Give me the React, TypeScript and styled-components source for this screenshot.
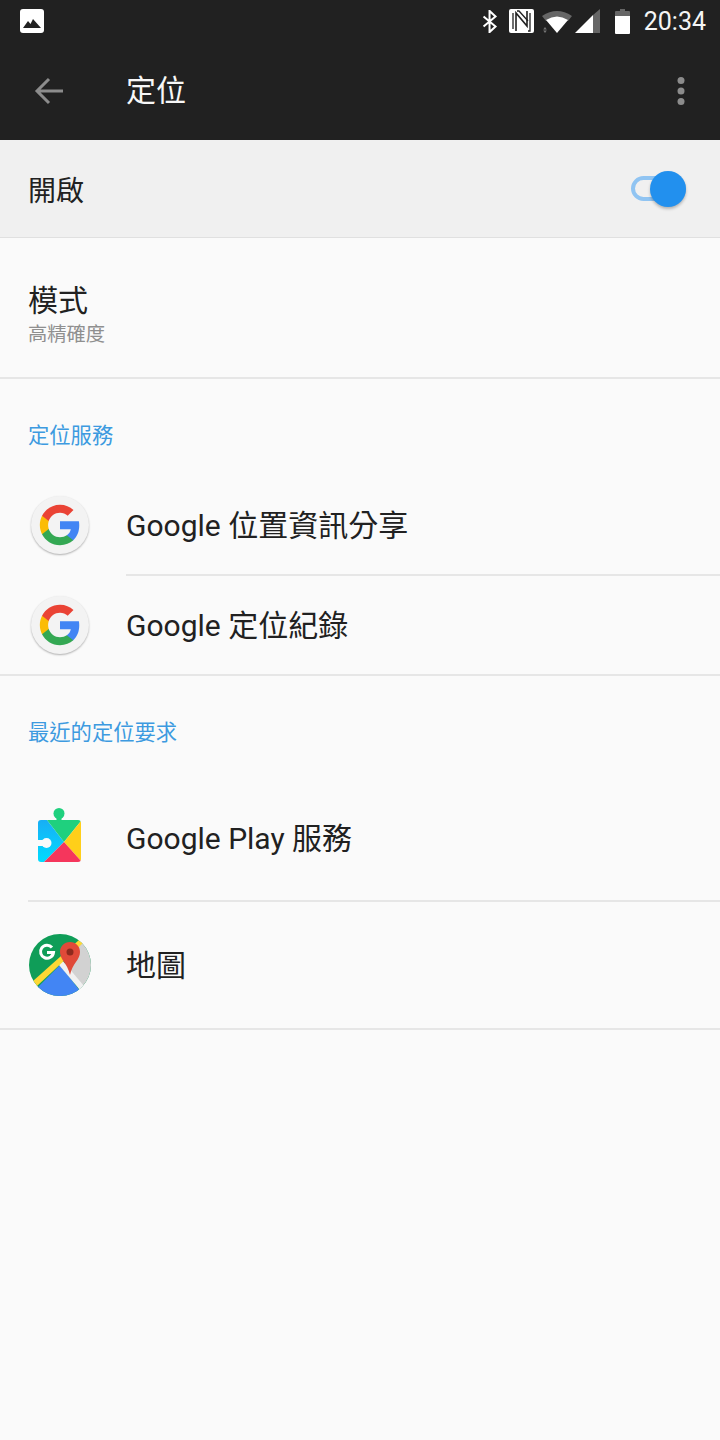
import React from 'react';
import styled, { createGlobalStyle } from 'styled-components';

const GlobalStyle = createGlobalStyle`
  html, body {
    margin: 0;
    padding: 0;
    background: #fafafa;
  }
  body {
    font-family: Roboto, "Noto Sans CJK TC", sans-serif;
  }
`;

const Page = styled.div`
  width: 720px;
  height: 1440px;
  overflow: hidden;
  background: #fafafa;
  display: flex;
  flex-direction: column;
`;

const Header = styled.header`
  height: 140px;
  background: #212121;
  display: flex;
  flex-direction: column;
`;

const StatusBar = styled.div`
  height: 42px;
  padding: 0 14px 0 20px;
  display: flex;
  align-items: center;
  justify-content: space-between;
  color: #fff;
`;

const StatusRight = styled.div`
  display: flex;
  align-items: center;
`;

const StatusIcon = styled.svg<{ $gap?: number }>`
  display: block;
  margin-left: ${p => p.$gap ?? 0}px;
`;

const Clock = styled.span`
  font-size: 25px;
  margin-left: 14px;
  color: #f5f5f5;
`;

const Toolbar = styled.div`
  height: 98px;
  display: flex;
  align-items: center;
  padding: 0 34px 0 34px;
`;

const ToolbarTitle = styled.h1`
  margin: 0 0 0 62px;
  flex: 1;
  font-size: 30px;
  line-height: 40px;
  font-weight: 400;
  color: #f7f7f7;
`;

const SwitchRow = styled.div`
  height: 98px;
  box-sizing: border-box;
  background: #f0f0f0;
  border-bottom: 1px solid #e0e0e0;
  display: flex;
  align-items: center;
  justify-content: space-between;
  padding: 0 34px 0 28px;
`;

const SwitchLabel = styled.span`
  font-size: 28px;
  color: #212121;
`;

const Track = styled.div`
  position: relative;
  width: 55px;
  height: 25px;
  box-sizing: border-box;
  border: 4px solid #90c4f2;
  border-radius: 13px;
`;

const Thumb = styled.div`
  position: absolute;
  right: -4px;
  top: -9px;
  width: 36px;
  height: 36px;
  border-radius: 50%;
  background: #2290ee;
  box-shadow: 0 2px 3px rgba(0, 0, 0, 0.25);
`;

const ModeRow = styled.div`
  height: 141px;
  box-sizing: border-box;
  border-bottom: 2px solid #e6e6e6;
  padding: 43px 28px 0;
`;

const ModeTitle = styled.div`
  font-size: 30px;
  line-height: 40px;
  color: #212121;
`;

const ModeValue = styled.div`
  font-size: 19.300px;
  line-height: 28px;
  color: #8f8f8f;
`;

const SectionTitle = styled.div<{ $height: number }>`
  height: ${p => p.$height}px;
  box-sizing: border-box;
  padding: 42px 28px 0;
  font-size: 21.300px;
  line-height: 30px;
  color: #3d9ae0;
`;

const Row = styled.div<{ $height: number }>`
  height: ${p => p.$height}px;
  display: flex;
  align-items: center;
  padding-left: 28px;
`;

const IconSlot = styled.div`
  width: 64px;
  height: 64px;
  margin-right: 34px;
  display: flex;
  align-items: center;
  justify-content: center;
`;

const RowLabel = styled.span`
  font-size: 30px;
  color: #212121;
  margin-bottom: 4px;
`;

const Divider = styled.div<{ $inset: number }>`
  height: 2px;
  margin-left: ${p => p.$inset}px;
  background: #e6e6e6;
`;

const GoogleBadge = styled.div`
  width: 58px;
  height: 58px;
  margin-right: 1px;
  border-radius: 50%;
  background: #f3f3f3;
  box-shadow: 0 1px 2px rgba(0, 0, 0, 0.3);
  display: flex;
  align-items: center;
  justify-content: center;
`;

const PlaySvg = styled.svg`
  margin-bottom: 6px;
`;

const GoogleG = () => (
  <svg width="44" height="44" viewBox="0 0 48 48">
    <path fill="#4285f4" d="M45 24.500c0-1.600-.1-3.100-.4-4.500H24v8.500h11.800c-.5 2.700-2 5-4.400 6.600v5.500h7.100C42.700 36.700 45 31.100 45 24.500z" />
    <path fill="#34a853" d="M24 46c5.900 0 10.900-2 14.500-5.300l-7.100-5.500c-2 1.300-4.500 2.100-7.400 2.100-5.700 0-10.500-3.800-12.300-9H4.400v5.700C8 41.100 15.400 46 24 46z" />
    <path fill="#fbbc05" d="M11.700 28.300c-.4-1.300-.7-2.800-.7-4.300s.3-3 .7-4.300V14H4.400C2.900 17 2 20.400 2 24s.9 7 2.400 10l7.300-5.700z" />
    <path fill="#ea4335" d="M24 10.700c3.200 0 6.100 1.100 8.400 3.300l6.300-6.300C34.900 4.200 29.900 2 24 2 15.400 2 8 6.900 4.400 14l7.300 5.700c1.800-5.200 6.600-9 12.300-9z" />
  </svg>
);

const PlayServices = () => (
  <PlaySvg width="44" height="56" viewBox="0 0 44 56">
    <defs>
      <clipPath id="playBody">
        <rect x="0" y="13" width="43" height="42" rx="3" />
      </clipPath>
      <linearGradient id="playCyan" x1="0" y1="0" x2="0" y2="1">
        <stop offset="0" stopColor="#18aef5" />
        <stop offset="1" stopColor="#00dcff" />
      </linearGradient>
    </defs>
    <circle cx="21" cy="6.500" r="5.500" fill="#1fd07e" />
    <rect x="18.500" y="10" width="5" height="5" fill="#1fd07e" />
    <g clipPath="url(#playBody)">
      <path fill="url(#playCyan)" d="M0 13h9l17 22L6 55H0z" />
      <path fill="#1fd07e" d="M9 13h34v1L26 35z" />
      <path fill="#ffcf1a" d="M43 14v40L26 35z" />
      <path fill="#f5365c" d="M26 35l17 19v1H6z" />
    </g>
    <circle cx="8.500" cy="36" r="5" fill="#fafafa" />
    <rect x="0" y="33" width="8" height="6" fill="#fafafa" />
  </PlaySvg>
);

const MapsIcon = () => (
  <svg width="62" height="62" viewBox="0 0 62 62">
    <defs>
      <clipPath id="mapsDisc">
        <circle cx="31" cy="31" r="31" />
      </clipPath>
    </defs>
    <g clipPath="url(#mapsDisc)">
      <rect width="62" height="62" fill="#0f9d58" />
      <path fill="#d2d2d2" d="M52 6h10v56h-8L36 30z" />
      <path fill="#4285f4" d="M31 31l24 31H4V58z" />
      <path fill="#f1f1f1" d="M33 26l22 26-4 4-21-25z" />
      <path fill="#fdd835" d="M4 47L50 6l4 3L8 52z" />
    </g>
    <path fill="#e04a39" d="M41 8c-6 0-10 4.500-10 10 0 8 7.500 11 10 23 2.500-12 10-15 10-23 0-5.500-4-10-10-10z" />
    <circle cx="41" cy="18" r="3.500" fill="#8e2a1e" />
    <path fill="none" stroke="#fff" strokeWidth="3" d="M23 13.500a6.500 6.500 0 1 0 1.500 5h-6.500" />
  </svg>
);

const App: React.FC = () => (
  <Page>
    <GlobalStyle />
    <Header>
      <StatusBar>
        <svg width="24" height="24" viewBox="0 0 24 24">
          <rect width="24" height="24" rx="3" fill="#fff" />
          <path fill="#212121" d="M3 19l5-7 2.500 3 2.500-5 8 9z" />
        </svg>
        <StatusRight>
          <StatusIcon width="16" height="23" viewBox="0 0 16 25" fill="none" stroke="#fff" strokeWidth="2.200">
            <path d="M1 7l13 11-6.500 6V1L14 7 1 18" />
          </StatusIcon>
          <StatusIcon $gap={11} width="25" height="24" viewBox="0 0 25 24">
            <rect width="25" height="24" rx="2" fill="#fff" />
            <path fill="none" stroke="#212121" strokeWidth="1.600" d="M7 22V4l11 13V2" />
            <path fill="none" stroke="#212121" strokeWidth="1.300" d="M8 2h2l9 10M4 20V4M21 4v18h-2" />
          </StatusIcon>
          <StatusIcon $gap={8} width="30" height="24" viewBox="0 0 30 24">
            <path fill="#666" d="M0 7Q15-3 30 7l-4 5Q15 5 4 12z" />
            <path fill="#fff" d="M4 11Q15 4 26 11L15 24z" />
            <path fill="#777" d="M3 18l1.800 2.500H1.200zM3 24l1.800-2.500H1.200z" />
          </StatusIcon>
          <StatusIcon $gap={3} width="25" height="24" viewBox="0 0 25 24">
            <path fill="#666" d="M25 0v24h-7V6z" />
            <path fill="#fff" d="M18 6v18H0z" />
          </StatusIcon>
          <StatusIcon $gap={15} width="15" height="25" viewBox="0 0 15 25">
            <path fill="#666" d="M5 0h5v2h4a1 1 0 0 1 1 1v5H0V3a1 1 0 0 1 1-1h4z" />
            <path fill="#fff" d="M0 7h15v17a1 1 0 0 1-1 1H1a1 1 0 0 1-1-1z" />
          </StatusIcon>
          <Clock>20:34</Clock>
        </StatusRight>
      </StatusBar>
      <Toolbar>
        <svg width="30" height="30" viewBox="0 0 30 30" fill="none" stroke="#8c8c8c" strokeWidth="3">
          <path d="M29 15H3M15 3L3 15l12 12" />
        </svg>
        <ToolbarTitle>定位</ToolbarTitle>
        <svg width="10" height="30" viewBox="0 0 10 30" fill="#8c8c8c">
          <circle cx="5" cy="4.500" r="3.500" />
          <circle cx="5" cy="15" r="3.500" />
          <circle cx="5" cy="25.500" r="3.500" />
        </svg>
      </Toolbar>
    </Header>
    <SwitchRow>
      <SwitchLabel>開啟</SwitchLabel>
      <Track>
        <Thumb />
      </Track>
    </SwitchRow>
    <ModeRow>
      <ModeTitle>模式</ModeTitle>
      <ModeValue>高精確度</ModeValue>
    </ModeRow>
    <SectionTitle $height={97}>定位服務</SectionTitle>
    <Row $height={98}>
      <IconSlot><GoogleBadge><GoogleG /></GoogleBadge></IconSlot>
      <RowLabel>Google 位置資訊分享</RowLabel>
    </Row>
    <Divider $inset={126} />
    <Row $height={98}>
      <IconSlot><GoogleBadge><GoogleG /></GoogleBadge></IconSlot>
      <RowLabel>Google 定位紀錄</RowLabel>
    </Row>
    <Divider $inset={0} />
    <SectionTitle $height={100}>最近的定位要求</SectionTitle>
    <Row $height={124}>
      <IconSlot><PlayServices /></IconSlot>
      <RowLabel>Google Play 服務</RowLabel>
    </Row>
    <Divider $inset={28} />
    <Row $height={126}>
      <IconSlot><MapsIcon /></IconSlot>
      <RowLabel>地圖</RowLabel>
    </Row>
    <Divider $inset={0} />
  </Page>
);

export default App;
